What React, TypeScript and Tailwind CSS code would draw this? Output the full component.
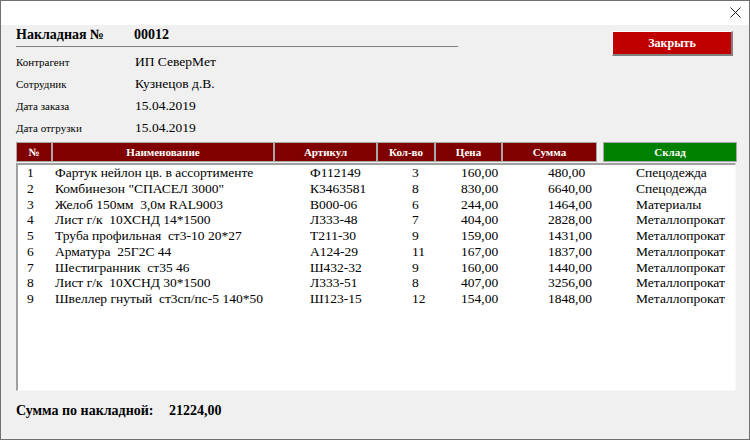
type Row = [string, string, string, string, string, string, string];

const rows: Row[] = [
  ["1", "Фартук нейлон цв. в ассортименте", "Ф112149", "3", "160,00", "480,00", "Спецодежда"],
  ["2", "Комбинезон \u0022СПАСЕЛ 3000\u0022", "К3463581", "8", "830,00", "6640,00", "Спецодежда"],
  ["3", "Желоб 150мм  3,0м RAL9003", "В000-06", "6", "244,00", "1464,00", "Материалы"],
  ["4", "Лист г/к  10ХСНД 14*1500", "Л333-48", "7", "404,00", "2828,00", "Металлопрокат"],
  ["5", "Труба профильная  ст3-10 20*27", "Т211-30", "9", "159,00", "1431,00", "Металлопрокат"],
  ["6", "Арматура  25Г2С 44", "А124-29", "11", "167,00", "1837,00", "Металлопрокат"],
  ["7", "Шестигранник  ст35 46", "Ш432-32", "9", "160,00", "1440,00", "Металлопрокат"],
  ["8", "Лист г/к  10ХСНД 30*1500", "Л333-51", "8", "407,00", "3256,00", "Металлопрокат"],
  ["9", "Швеллер гнутый  ст3сп/пс-5 140*50", "Ш123-15", "12", "154,00", "1848,00", "Металлопрокат"],
];

const fields = [
  ["Контрагент", "ИП СеверМет"],
  ["Сотрудник", "Кузнецов д.В."],
  ["Дата заказа", "15.04.2019"],
  ["Дата отгрузки", "15.04.2019"],
];

const columns = [
  ["№", "w-[36px]"],
  ["Наименование", "w-[222px]"],
  ["Артикул", "w-[103px]"],
  ["Кол-во", "w-[58px]"],
  ["Цена", "w-[67px]"],
  ["Сумма", "w-[95px]"],
];

function HeaderCell({ label, className }: { label: string; className: string }) {
  return (
    <div
      className={`flex h-[20px] items-center justify-center border border-[#a8a8a8] text-[11px] font-bold text-white ${className}`}
    >
      {label}
    </div>
  );
}

export default function App() {
  return (
    <div className="font-['Liberation_Serif']">
      <div className="flex h-[440px] w-[750px] flex-col border border-[#707070] bg-[#f0f0f0] text-black">
        {/* title bar */}
        <div className="flex h-[24px] shrink-0 items-center justify-end bg-white pr-[8px]">
          <svg width="11" height="11" viewBox="0 0 11 11" className="mt-[-1px]">
            <path d="M0.5 0.5L10.5 10.5M10.5 0.5L0.5 10.5" stroke="#1a1a1a" strokeWidth="1" />
          </svg>
        </div>

        <div className="flex flex-1 flex-col pl-[15px] pr-[12px]">
          <div className="flex">
            <div className="flex flex-col">
              <div className="box-border flex h-[22px] w-[442px] items-start border-b border-[#808080] pt-[2px] text-[14px] font-bold leading-[16px]">
                <span className="w-[118px]">Накладная №</span>
                <span>00012</span>
              </div>
              <div className="mt-[4px] flex flex-col">
                {fields.map(([label, value]) => (
                  <div key={label} className="flex h-[22px] items-baseline leading-[22px]">
                    <span className="w-[119px] text-[11px]">{label}</span>
                    <span className="text-[13.5px]">{value}</span>
                  </div>
                ))}
              </div>
            </div>
            <button
              type="button"
              className="ml-auto mr-[4px] mt-[6px] box-border flex h-[25px] w-[121px] items-center justify-center border-l border-t border-b-2 border-r-2 border-l-white border-t-white border-b-[#808080] border-r-[#808080] bg-[#c00000] text-[12px] font-bold text-white"
            >
              Закрыть
            </button>
          </div>

          {/* table header */}
          <div className="mt-[3px] flex">
            {columns.map(([label, w]) => (
              <HeaderCell key={label} label={label} className={`bg-[#800000] ${w}`} />
            ))}
            <HeaderCell label="Склад" className="ml-[6px] w-[134px] bg-[#008000]" />
          </div>

          {/* list */}
          <div className="mt-[1px] box-border h-[228px] w-[720px] border-l-2 border-t-2 border-b border-r border-l-[#a0a0a0] border-t-[#a0a0a0] border-b-[#f8f8f8] border-r-[#f8f8f8] bg-white pl-[9px] text-[13.5px] leading-[15.75px]">
            {rows.map((r) => (
              <div
                key={r[0]}
                className="grid grid-cols-[28px_255px_102px_49px_87px_88px_1fr] whitespace-pre"
              >
                {r.map((c, i) => (
                  <span key={i}>{c}</span>
                ))}
              </div>
            ))}
          </div>

          <div className="mt-[12px] flex text-[14px] font-bold leading-[16px]">
            <span className="w-[153px]">Сумма по накладной:</span>
            <span>21224,00</span>
          </div>
        </div>
      </div>
    </div>
  );
}
